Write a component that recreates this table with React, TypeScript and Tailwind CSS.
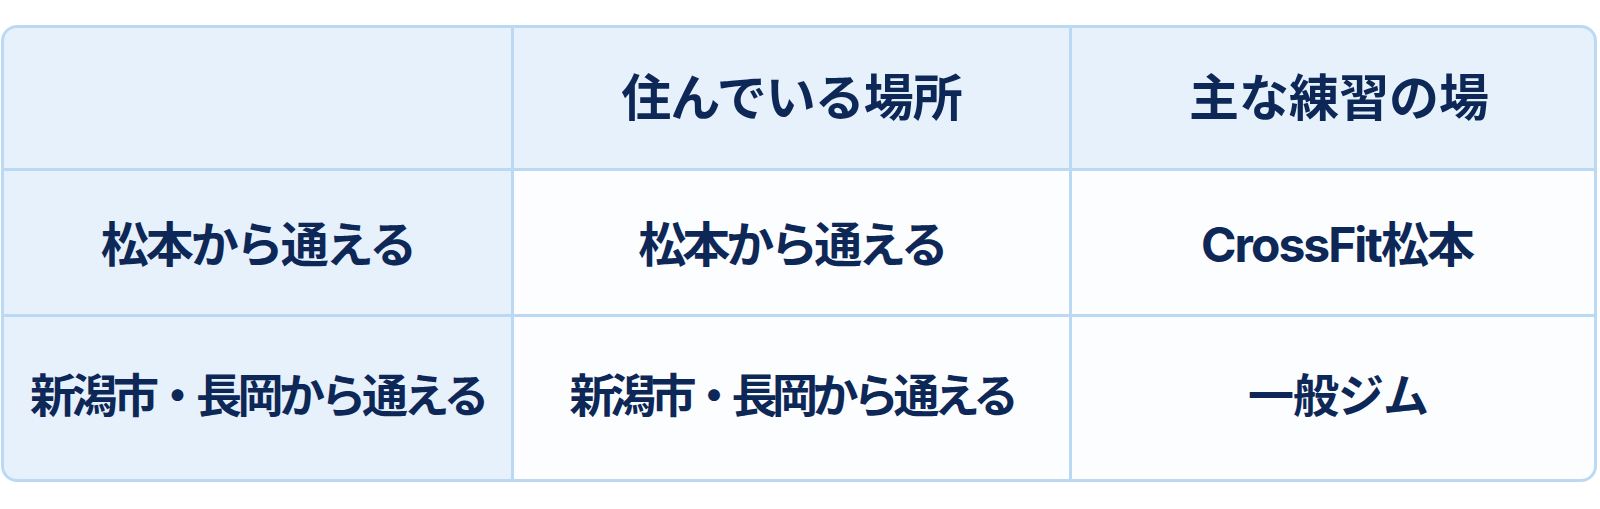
const rows = [
  {
    label: "松本から通える",
    place: "松本から通える",
    gym: "CrossFit松本",
    cls: "flex items-center justify-center pt-[5px] text-[48px]",
    track: ["tracking-[-3px]", "tracking-[-4px]", "tracking-[-2px] pl-[8px] text-[44px]"],
  },
  {
    label: "新潟市・長岡から通える",
    place: "新潟市・長岡から通える",
    gym: "一般ジム",
    cls: "flex items-center justify-center pb-[5px] text-[46px]",
    track: ["tracking-[-4.5px]", "tracking-[-5.5px]", "tracking-[-1px] pl-[10px]"],
  },
];

const font = { fontFamily: 'Inter, "Noto Sans CJK JP", "Noto Sans", sans-serif' };

export default function App() {
  return (
    <div className="w-[1600px] h-[509px] bg-white pt-[25px] pl-[1px]" style={font}>
      <div className="w-[1596px] h-[457px] rounded-[16px] border-[3px] border-[#bcd9f4] bg-[#bcd9f4] overflow-hidden grid grid-cols-[507px_555px_1fr] grid-rows-[140px_143px_1fr] gap-[3px] text-[#0d2757] font-bold">
        {/* header */}
        <div className="bg-[#e7f1fc]" />
        <div className="bg-[#e7f1fc] flex items-center justify-center text-[50px] tracking-[-1px]">
          住んでいる場所
        </div>
        <div className="bg-[#e7f1fc] flex items-center justify-center pl-[12px] text-[50px] tracking-[0px]">
          主な練習の場
        </div>

        {rows.map((r, i) => (
          <div key={i} className="contents">
            <div className={`bg-[#e7f1fc] ${r.cls} ${r.track[0]}`}>{r.label}</div>
            <div className={`bg-[#fbfdff] ${r.cls} ${r.track[1]}`}>{r.place}</div>
            <div className={`bg-[#fbfdff] ${r.cls} ${r.track[2]}`}>{r.gym}</div>
          </div>
        ))}
      </div>
    </div>
  );
}
